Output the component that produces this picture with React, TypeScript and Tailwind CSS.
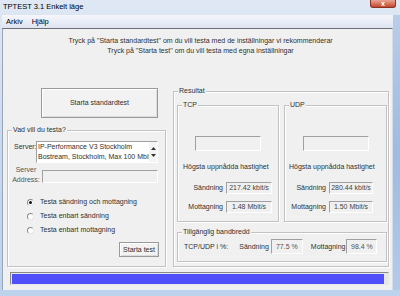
import React from "react";

const sunken = "border border-t-[#a0a0a0] border-l-[#a0a0a0] border-b-white border-r-white";

const Group: React.FC<{ title: string; className?: string; children?: React.ReactNode }> = ({ title, className, children }) => (
  <div className={`relative border border-[#c2c2c2] shadow-[inset_1px_1px_0_#fff,1px_1px_0_#fff] ${className ?? ""}`}>
    <span className="absolute -top-[6px] left-[4px] bg-[#f0f0f0] px-[1px] leading-[10px]">{title}</span>
    {children}
  </div>
);

const Radio: React.FC<{ label: string; checked?: boolean }> = ({ label, checked }) => (
  <div className="flex items-center h-[14px]">
    <span className="ml-[19px] w-[7px] h-[7px] rounded-full border border-t-[#8a8a8a] border-l-[#8a8a8a] border-b-[#e6e6e6] border-r-[#e6e6e6] bg-white flex items-center justify-center">
      {checked && <span className="w-[3px] h-[3px] rounded-full bg-[#111]" />}
    </span>
    <span className="ml-[6px]">{label}</span>
  </div>
);

const Row: React.FC<{ label: string; value: string; className: string; boxClass: string }> = ({ label, value, className, boxClass }) => (
  <div className={`flex items-center justify-end gap-[3px] h-[12px] ${className}`}>
    <span>{label}</span>
    <div className={`${sunken} ${boxClass} h-[12px] flex items-center justify-center text-[#444]`}>{value}</div>
  </div>
);

export default function App() {
  return (
    <div className="w-[400px] h-[296px] overflow-hidden flex flex-col bg-gradient-to-b from-[#dfe8f4] via-[#c8d9ee] to-[#bdd2ec] font-['Liberation_Sans',Arial,sans-serif] text-[7px] leading-[10px] text-[#303030]">
      {/* title bar */}
      <div className="h-[15px] flex items-start justify-between">
        <span className="pl-[3px] pt-[2px] text-[7.5px] leading-[10px] text-black">TPTEST 3.1 Enkelt läge</span>
        <div className="mr-[4px] w-[26px] h-[8px] rounded-b-[3px] border border-t-0 border-[#8a3426] bg-gradient-to-b from-[#e8a595] to-[#c3442f] flex items-center justify-center text-white text-[7px] font-bold leading-none">
          x
        </div>
      </div>

      <div className="flex-1 flex">
        <div className="w-[2px]" />
        <div className="w-[391px] flex flex-col">
          {/* menu */}
          <div className="h-[13px] flex items-center gap-[9px] pl-[4px] bg-gradient-to-b from-[#f6f7fc] to-[#dde3f1] text-[7.5px] text-black">
            <span>Arkiv</span>
            <span>Hjälp</span>
          </div>

          {/* client */}
          <div className="flex-1 flex flex-col bg-[#f0f0f0] border-t border-l border-r border-t-[#6f7378] border-l-[#9aa6b6] border-r-[#d6dde8]">
            <div className="pt-[7px] pl-[6px] text-center">
              <div>Tryck på "Starta standardtest" om du vill testa med de inställningar vi rekommenderar</div>
              <div>Tryck på "Starta test" om du vill testa med egna inställningar</div>
            </div>

            <div className="flex mt-[32px]">
              {/* left column */}
              <div className="ml-[4px] w-[159px] flex flex-col">
                <div className="ml-[34px] w-[117px] h-[30px] border border-[#9a9a9a] bg-[#f2f2f2] shadow-[inset_1px_1px_0_#fff,inset_-1px_-1px_0_#dcdcdc] flex items-center justify-center">
                  Starta standardtest
                </div>

                <Group title="Vad vill du testa?" className="mt-[12px] h-[137px] flex flex-col">
                  <div className="flex pt-[10px]">
                    <span className="ml-[6px] w-[22px] pt-[1px]">Server:</span>
                    <div className={`${sunken} border-t-[#808080] border-l-[#808080] w-[122px] h-[22px] bg-white flex overflow-hidden`}>
                      <div className="flex-1 pl-[1px] overflow-hidden whitespace-nowrap">
                        <div>IP-Performance V3 Stockholm</div>
                        <div>Bostream, Stockholm, Max 100 Mbit</div>
                        <div>Bredbandsbolaget, Stockholm</div>
                      </div>
                      <div className="w-[8px] bg-[#f4f4f4] flex flex-col items-center justify-between py-[5px]">
                        <svg width="5" height="3" viewBox="0 0 5 3"><path d="M0 3 L2.5 0 L5 3 Z" fill="#333" /></svg>
                        <svg width="5" height="3" viewBox="0 0 5 3"><path d="M0 0 L2.5 3 L5 0 Z" fill="#333" /></svg>
                      </div>
                    </div>
                  </div>
                  <div className="flex mt-[2px]">
                    <div className="ml-[2px] w-[32px] text-center text-[#555]">
                      <div>Server</div>
                      <div>Address:</div>
                    </div>
                    <div className={`${sunken} mt-[5px] w-[116px] h-[13px] bg-[#f0f0f0]`} />
                  </div>
                  <div className="mt-[10px]">
                    <Radio label="Testa sändning och mottagning" checked />
                    <Radio label="Testa enbart sändning" />
                    <Radio label="Testa enbart mottagning" />
                  </div>
                  <div className="self-end mr-[6px] mt-[5px] w-[40px] h-[15px] border border-[#9a9a9a] bg-[#f2f2f2] shadow-[inset_1px_1px_0_#fff,inset_-1px_-1px_0_#dcdcdc] flex items-center justify-center">
                    Starta test
                  </div>
                </Group>
              </div>

              {/* right column */}
              <Group title="Resultat" className="ml-[7px] mt-[3px] w-[216px] h-[176px] flex flex-col">
                <div className="flex pt-[13px] ml-[3px]">
                  <Group title="TCP" className="w-[102px] h-[117px] flex flex-col">
                    <div className={`${sunken} mt-[30px] mx-auto w-[66px] h-[15px]`} />
                    <div className="mt-[11px] pl-[5px]">Högsta uppnådda hastighet</div>
                    <Row label="Sändning" value="217.42 kbit/s" className="mt-[10px] pr-[6px]" boxClass="w-[46px]" />
                    <Row label="Mottagning" value="1.48 Mbit/s" className="mt-[7px] pr-[6px]" boxClass="w-[46px]" />
                  </Group>
                  <Group title="UDP" className="ml-[5px] w-[103px] h-[117px] flex flex-col">
                    <div className={`${sunken} mt-[30px] mx-auto w-[66px] h-[15px]`} />
                    <div className="mt-[11px] pl-[4px]">Högsta uppnådda hastighet</div>
                    <Row label="Sändning" value="280.44 kbit/s" className="mt-[10px] pr-[13px]" boxClass="w-[44px]" />
                    <Row label="Mottagning" value="1.50 Mbit/s" className="mt-[7px] pr-[13px]" boxClass="w-[44px]" />
                  </Group>
                </div>
                <Group title="Tillgänglig bandbredd" className="mt-[10px] ml-[3px] w-[210px] h-[30px]">
                  <div className="flex items-center pt-[6px]">
                    <span className="ml-[6px]">TCP/UDP i %:</span>
                    <span className="ml-[11px]">Sändning</span>
                    <div className={`${sunken} ml-[2px] w-[32px] h-[15px] flex items-center justify-center text-[#555]`}>77.5 %</div>
                    <span className="ml-[8px]">Mottagning</span>
                    <div className={`${sunken} ml-[1px] w-[31px] h-[15px] flex items-center justify-center text-[#555]`}>98.4 %</div>
                  </div>
                </Group>
              </Group>
            </div>

            {/* progress */}
            <div className="ml-[7px] mt-[5px] w-[379px] h-[13px] border border-t-[#8a8a8a] border-l-[#8a8a8a] border-b-[#e8e8e8] border-r-[#e8e8e8] bg-[#e6e6e6] flex items-start">
              <div className="ml-[1px] mt-[1px] w-[372px] h-[10px] bg-[#5050fa]" />
            </div>
          </div>
        </div>
        <div className="flex-1 bg-gradient-to-b from-[#b7cde9] via-[#9fbbe0] to-[#b3cbe9]" />
      </div>
      <div className="h-[6px]" />
    </div>
  );
}
